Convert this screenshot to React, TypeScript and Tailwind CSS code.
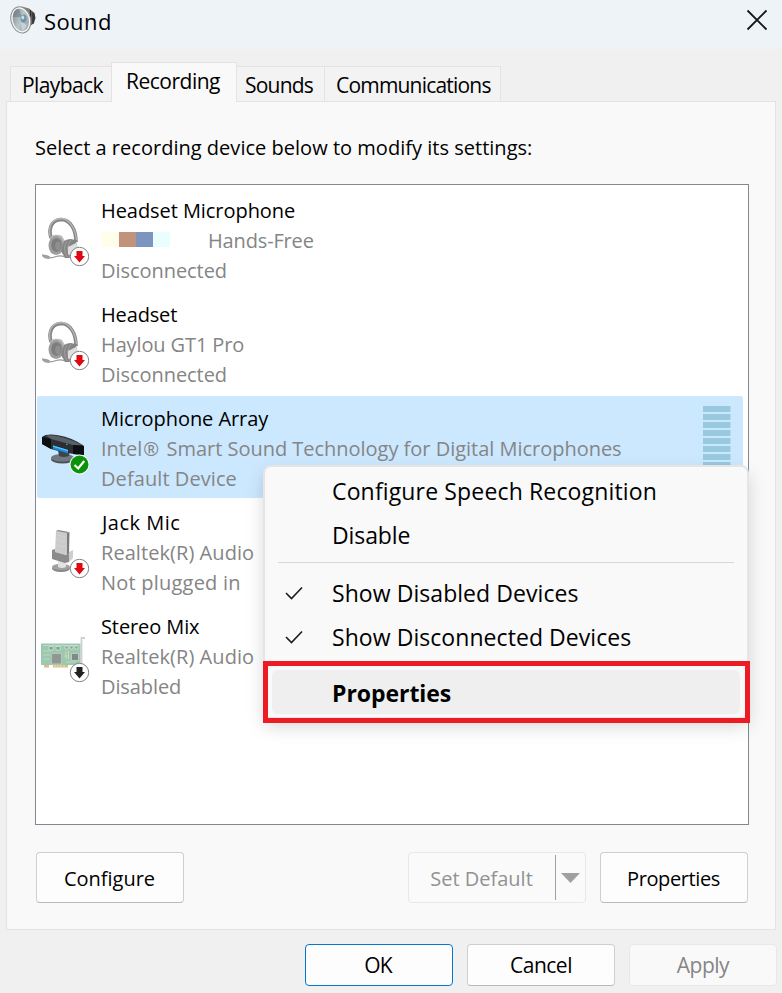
import type { ReactNode } from "react";

const SpeakerIcon = () => (
    <svg width="28" height="30" viewBox="0 0 28 30">
        <defs>
            <linearGradient id="cone" x1="0" y1="0" x2="1" y2="1">
                <stop offset="0" stopColor="#77858c" />
                <stop offset="0.5" stopColor="#b9c5cb" />
                <stop offset="1" stopColor="#8d9aa1" />
            </linearGradient>
            <linearGradient id="magnet" x1="0" y1="0" x2="1" y2="0">
                <stop offset="0.500" stopColor="#7a7a7a" />
                <stop offset="1" stopColor="#303030" />
            </linearGradient>
        </defs>
        <path d="M12 1.500L19 3.500 24.500 8 25.500 13 24 18 19 22 15 27Z" fill="url(#magnet)" />
        <path d="M20.500 5v15M23 8v11" stroke="#2c2c2c" strokeWidth="1" />
        <ellipse cx="10.800" cy="14.800" rx="9.800" ry="13.300" transform="rotate(-14 10.800 14.800)" fill="#f4f4f4" stroke="#8a8a8a" />
        <ellipse cx="10.800" cy="14.800" rx="8" ry="11.300" transform="rotate(-14 10.800 14.800)" fill="url(#cone)" />
        <path d="M3 12Q3 4 9 4L12 12Z" fill="#65737a" opacity="0.5" />
        <path d="M11 17L17 20Q16 25 12 25.500Z" fill="#dce3e6" opacity="0.6" />
        <ellipse cx="13.500" cy="13.500" rx="3" ry="4" fill="#6d93a6" />
        <ellipse cx="12.800" cy="12.500" rx="1.500" ry="2" fill="#c9dce4" />
    </svg>
);

const Badge = ({ kind }: { kind: "red" | "black" | "check" }) => (
    <g>
        {kind === "check" ? (
            <>
                <circle cx="39.500" cy="52.500" r="10" fill="#f5faf5" />
                <circle cx="39.500" cy="52.500" r="9" fill="#0b920b" />
                <path d="M34.500 53l3.700 3.500 6-7.500" fill="none" stroke="white" strokeWidth="2.200" />
            </>
        ) : (
            <>
                <circle cx="39.500" cy="52.500" r="9.200" fill="white" stroke="#858585" strokeWidth="1" />
                <path d="M36.500 47h6v5h2.500L39.500 58.500 34 52h2.500z" fill={kind === "red" ? "#df0710" : "#222222"} />
            </>
        )}
    </g>
);

const HeadsetIcon = () => (
    <svg width="52" height="66" viewBox="0 0 52 66">
        <path d="M11 34C8 24 12 16 21 15.500C30 15.500 36 25 36 38" fill="none" stroke="#858585" strokeWidth="3.600" />
        <path d="M10 32C8 22 12 15 21 14.500C29 15 35 23 36.500 36" fill="none" stroke="#b5b5b5" strokeWidth="1.400" />
        <path d="M10 33Q15 29 22 32L26 39 20 50 11 48Z" fill="#b9b9b9" />
        <ellipse cx="16" cy="41.500" rx="7.500" ry="9.500" fill="#9d9d9d" />
        <ellipse cx="16.500" cy="41" rx="5.300" ry="6.800" fill="#7e7e7e" />
        <ellipse cx="18" cy="42" rx="2.800" ry="4.200" fill="#8f8f8f" />
        <path d="M24 37Q31 33 36 37L38 47 33 54 25 54 21 47Z" fill="#858585" />
        <path d="M27 37Q22 44 27 53M31 36Q25 44 30 54" fill="none" stroke="#a0a0a0" strokeWidth="1" />
        <path d="M28 43l8-4 3 5-8 8-3-2z" fill="#dedede" />
        <path d="M6 53Q10 55 16 52.500Q21 51 25 53" fill="none" stroke="#989898" strokeWidth="1.300" />
        <path d="M2 50.500q4-.5 8 2l-1 2.500q-5 0-7-3z" fill="#a0a0a0" />
        <Badge kind="red" />
    </svg>
);

const ArrayIcon = () => (
    <svg width="52" height="66" viewBox="0 0 52 66">
        <ellipse cx="22.500" cy="47.500" rx="11.500" ry="4" fill="#4c5259" />
        <ellipse cx="22.500" cy="45.800" rx="11.500" ry="3.800" fill="#717980" />
        <path d="M18 38h12l-1 6q-6 2-10 0z" fill="#3e444a" />
        <path d="M2 25Q6 21.500 17 23Q34 26 44 34L44 43Q27 42 11 37L2 32Z" fill="#2b2f33" />
        <path d="M6 23.500Q18 21.500 43 33L33 33 11 27Z" fill="#596068" />
        <path d="M2 25l9 2v10l-9-5zM33 33l11 1v9l-11-1z" fill="#0c0f11" />
        <path d="M13 33.500l15 4.500v3.500l-15-4.500z" fill="#168be0" />
        <path d="M13 33.500l15 4.500v1.200l-15-4.500z" fill="#62c7ff" />
        <path d="M26 32l1.500.6" stroke="#36c0f0" />
        <Badge kind="check" />
    </svg>
);

const JackIcon = () => (
    <svg width="52" height="66" viewBox="0 0 52 66">
        <ellipse cx="21" cy="52.500" rx="9" ry="3.500" fill="#858585" />
        <ellipse cx="21" cy="51" rx="9" ry="3.200" fill="#a0a0a0" />
        <path d="M18 44h8v7q-4 2-8 0z" fill="#e2e2e2" />
        <path d="M16 15l11 2v22l-12-3z" fill="#cbcbcb" />
        <path d="M16 15l2-1 11 2-2 1z" fill="#858585" />
        <path d="M27 17l2.500-1-.5 21-2 2z" fill="#7b7b7b" />
        <path d="M17 19l9 2M17 24l9 2M16 29l10 2" stroke="#d3d3d3" strokeWidth="0.800" />
        <path d="M12 34l3-1v3l11 3 3-2v9l-4 1-13-4z" fill="#8b8b8b" />
        <path d="M29 36l4-2v8l-4 4z" fill="#cecece" />
        <Badge kind="red" />
    </svg>
);

const CardIcon = () => (
    <svg width="52" height="66" viewBox="0 0 52 66">
        <path d="M45 18h-3.500v34" fill="none" stroke="#cdd0ce" strokeWidth="1.800" />
        <path d="M1 23.500h39.500v21.500H1z" fill="#9bc8ae" />
        <path d="M3 25.500h35M3 31h8M3 35h7M3 39h7M26 42h10M24 36h5" stroke="#b9d9c6" strokeWidth="1" />
        <path d="M4 45h5v2.500H4zM13 45h15v2.500H13z" fill="#d8bd87" />
        <path d="M15 45v2.500M18 45v2.500M21 45v2.500M24 45v2.500" stroke="#eee1bd" strokeWidth="1" />
        <rect x="11.500" y="33.500" width="10" height="10.500" fill="#8f9994" stroke="#b9c4bd" strokeWidth="1" />
        <rect x="31.500" y="33.500" width="7" height="7" fill="#808b85" stroke="#c2c9c4" strokeWidth="1" />
        <path d="M9 26.500h4v3.500H9zM16 26.500h4v3.500h-4zM25 26h3v3h-3zM30 26h3v3h-3zM35 26h3v3h-3z" fill="#7ea18d" stroke="#dce8e1" strokeWidth="0.700" />
        <path d="M26 31v8M28.500 31v8" stroke="#d0dbab" strokeWidth="1" />
        <Badge kind="black" />
    </svg>
);

const CheckMark = () => (
    <svg className="ml-5 mr-[29px] mt-0.5" width="18" height="14" viewBox="0 0 18 14">
        <path d="M1 7l5.500 5.500L17 1.500" fill="none" stroke="#1c1c1c" strokeWidth="1.600" />
    </svg>
);

type DeviceProps = {
    icon: ReactNode;
    name: ReactNode;
    detail: ReactNode;
    status: ReactNode;
    selected?: boolean;
};

const Device = ({ icon, name, detail, status, selected }: DeviceProps) => (
    <div className={selected ? "flex h-[102px] w-[706px] rounded-[2px] bg-[#cce8ff]" : "flex h-[102px] w-[706px]"}>
        <div className="w-16 shrink-0 pl-[3px] pt-4">{icon}</div>
        <div className="flex-1 whitespace-nowrap pt-2 leading-[30px] text-[#858585]">
            <p className="text-black">{name}</p>
            <div className="h-[30px]">{detail}</div>
            <p>{status}</p>
        </div>
        {selected && (
            <div className="mr-3 flex w-7 flex-col gap-0.5 pt-2.5">
                {Array.from({ length: 8 }, (_, i) => (
                    <div key={i} className="h-1.5 w-7 border-r border-[#b2d9ed] bg-[#99c9df]" />
                ))}
            </div>
        )}
    </div>
);

const ContextMenu = () => (
    <div className="absolute left-[263px] top-[465px] h-[254px] w-[486px] whitespace-nowrap rounded-lg border-2 border-[#e5e5e5] bg-[#f9f9f9] text-[23px] tracking-[0.06px] shadow-[0_8px_18px_rgba(0,0,0,0.15)]">
        <div className="flex h-11 items-center pl-[67px] pt-[5px] tracking-[0.15px]">Configure Speech Recognition</div>
        <div className="flex h-11 items-center pl-[67px] pt-[5px] tracking-[-0.1px]">Disable</div>
        <div className="mx-[13px] mt-[7px] h-px bg-[#d7d7d7]" />
        <div className="mt-[7px] flex h-11 items-center">
            <CheckMark />
            <span className="pt-0.5">Show Disabled Devices</span>
        </div>
        <div className="flex h-11 items-center">
            <CheckMark />
            <span className="pt-0.5">Show Disconnected Devices</span>
        </div>
        <div className="ml-[7px] mt-3 flex h-11 w-[468px] items-center rounded-md bg-[#efefef] pl-[60px] pt-0.5 font-bold tracking-[-0.05px]">Properties</div>
    </div>
);

const App = () => {
    return (
        <div className="relative flex h-[993px] w-[782px] flex-col overflow-hidden bg-[#f0f0f0] font-['Open_Sans',sans-serif] text-[20px] text-black">
            <header className="flex h-[49px] shrink-0 items-start bg-[#eef3f8] pl-2.5 pt-[5px]">
                <SpeakerIcon />
                <h1 className="ml-1.5 text-[22px] leading-[33px] tracking-[0.4px]">Sound</h1>
                <svg className="ml-auto mr-[14px] mt-[4px]" width="22" height="22" viewBox="0 0 22 22">
                    <path d="M1.500 1.500l19 19M20.500 1.500l-19 19" stroke="#161616" strokeWidth="1.800" />
                </svg>
            </header>

            <nav className="relative z-10 ml-2.5 mt-[13px] flex h-10 items-end whitespace-nowrap text-[21px] tracking-[-0.6px]">
                <div className="flex h-9 w-[101px] items-center border border-r-0 border-[#e3e3e3] bg-[#f3f3f3] pl-[11px] pt-[3px]">Playback</div>
                <div className="flex h-10 w-[126px] items-center border border-b-0 border-[#e3e3e3] bg-[#f9f9f9] pb-px pl-[14px] tracking-[-0.5px]">Recording</div>
                <div className="flex h-9 w-[88px] items-center border border-l-0 border-[#e3e3e3] bg-[#f3f3f3] pl-2 pt-[3px] tracking-[-0.8px]">Sounds</div>
                <div className="flex h-9 w-[176px] items-center border border-l-0 border-[#e3e3e3] bg-[#f3f3f3] pl-[11px] pt-[3px] tracking-[-0.8px]">Communications</div>
            </nav>

            <main className="-mt-px ml-1.5 h-[829px] w-[770px] shrink-0 border border-[#e3e3e3] bg-[#f9f9f9] px-7">
                <p className="mt-[31px] whitespace-nowrap leading-[30px] tracking-[0.02px]">Select a recording device below to modify its settings:</p>
                <div className="mt-[21px] flex h-[641px] w-[714px] flex-col gap-0.5 border border-[#828790] bg-white pl-px pt-[3px]">
                    <Device
                        icon={<HeadsetIcon />}
                        name={<span className="tracking-[-0.06px]">Headset Microphone</span>}
                        detail={
                            <div className="flex">
                                <div className="mr-[38px] mt-1.5 flex h-[15px] pl-px">
                                    <i className="w-[17px] bg-[#ffffe9]" />
                                    <i className="w-[17px] bg-[#c1937b]" />
                                    <i className="w-[17px] bg-[#7d94c0]" />
                                    <i className="w-[17px] bg-[#e9ffff]" />
                                </div>
                                <span className="tracking-[-0.15px]">Hands-Free</span>
                            </div>
                        }
                        status={<span className="tracking-[-0.05px]">Disconnected</span>}
                    />
                    <Device
                        icon={<HeadsetIcon />}
                        name={<span className="tracking-[-0.15px]">Headset</span>}
                        detail={<span className="tracking-[-0.12px]">Haylou GT1 Pro</span>}
                        status={<span className="tracking-[-0.05px]">Disconnected</span>}
                    />
                    <Device
                        icon={<ArrayIcon />}
                        name={<span className="tracking-[-0.06px]">Microphone Array</span>}
                        detail={
                            <>
                                Intel<span className="mx-px inline-block w-[17px] text-[19px]">®</span> <span className="tracking-[-0.02px]">Smart Sound Technology for Digital Microphones</span>
                            </>
                        }
                        status={<span className="tracking-[0.08px]">Default Device</span>}
                        selected
                    />
                    <Device
                        icon={<JackIcon />}
                        name={<span className="pl-px tracking-[0.5px]">Jack Mic</span>}
                        detail={<span className="tracking-[0.06px]">Realtek(R) Audio</span>}
                        status={<span className="tracking-[0.22px]">Not plugged in</span>}
                    />
                    <Device
                        icon={<CardIcon />}
                        name={<span className="tracking-[-0.1px]">Stereo Mix</span>}
                        detail={<span className="tracking-[0.06px]">Realtek(R) Audio</span>}
                        status={<span className="tracking-[-0.1px]">Disabled</span>}
                    />
                </div>
                <div className="mt-[27px] flex pl-px">
                    <button className="h-[51px] w-[148px] rounded border border-[#cfcfcf] border-b-[#b9b9b9] bg-[#fdfdfd] pr-px pt-0.5">Configure</button>
                    <div className="ml-auto flex h-[51px] w-[178px] items-center rounded border border-[#e8e8e8] bg-[#fafafa] text-[#929292]">
                        <span className="w-[145px] pt-0.5 text-center">Set Default</span>
                        <i className="ml-px h-[45px] w-px bg-[#a0a0a0]" />
                        <svg className="ml-[5px]" width="19" height="10" viewBox="0 0 19 10">
                            <path d="M0 0h19L9.500 10z" fill="#a0a0a0" />
                        </svg>
                    </div>
                    <button className="ml-[14px] mr-[-1px] h-[51px] w-[148px] rounded border border-[#cfcfcf] border-b-[#b9b9b9] bg-[#fdfdfd] pr-px pt-0.5 tracking-[-0.4px]">Properties</button>
                </div>
            </main>

            <footer className="mt-[14px] flex justify-end gap-[14px] pr-[5px] text-[21px] tracking-[-0.5px]">
                <button className="h-[42px] w-[148px] rounded border border-[#0078d4] bg-[#fdfdfd] pr-0.5 pt-0.5 tracking-[-0.8px]">OK</button>
                <button className="h-[42px] w-[148px] rounded border border-[#cfcfcf] border-b-[#b9b9b9] bg-[#fdfdfd] pt-0.5">Cancel</button>
                <button className="h-[42px] w-[148px] rounded border border-[#e8e8e8] bg-[#f9f9f9] pt-0.5 text-[#858585]">Apply</button>
            </footer>

            <ContextMenu />
            <div className="absolute left-[263px] top-[661px] h-[62px] w-[487px] border-[5px] border-[#ed1c24]" />
        </div>
    );
};

export default App;
